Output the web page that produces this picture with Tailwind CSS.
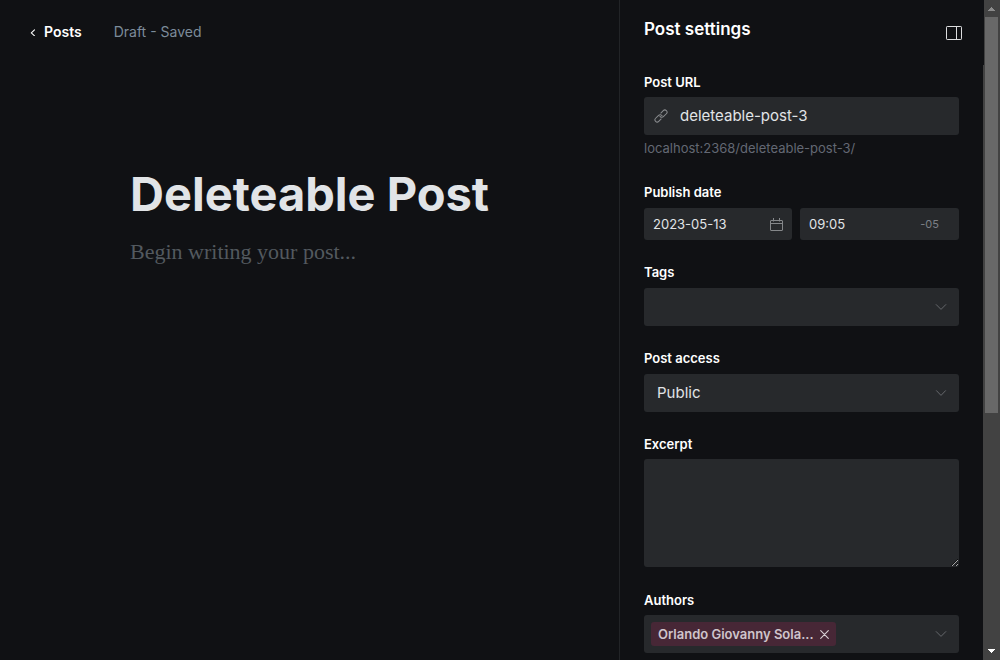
<!DOCTYPE html>
<html lang="en">
<head>
<meta charset="utf-8">
<meta name="viewport" content="width=device-width, initial-scale=1">
<title>Deleteable Post</title>
<script src="https://cdn.jsdelivr.net/npm/@tailwindcss/browser@4"></script>
</head>
<body class="flex h-screen overflow-hidden bg-[#101114] font-['Inter',sans-serif] text-[#e1e4e7]">

<main class="flex min-w-0 flex-1 flex-col">
  <header class="flex items-center gap-8 px-7 pt-5">
    <a href="#" class="flex h-6 items-center gap-2 text-sm font-semibold text-white">
      <svg class="size-2 shrink-0" viewBox="0 0 8 8" fill="none" stroke="#fff" stroke-width="1.1" stroke-linecap="round" stroke-linejoin="round" aria-hidden="true"><path d="M6.5 1.8 3.3 4.9 6.5 7.8"/></svg>
      Posts
    </a>
    <span class="text-sm text-[#7c8b9a]">Draft - Saved</span>
  </header>
  <section class="flex flex-col pt-[120px] pr-10 pl-[130px]">
    <h1 class="text-[47px] leading-[60px] font-bold">Deleteable Post</h1>
    <p class="mt-3 font-['Liberation_Serif',serif] text-[22px] leading-8 text-[#53595f]">Begin writing your post...</p>
  </section>
</main>

<aside class="flex w-[364px] shrink-0 flex-col overflow-hidden border-l border-[#222427]">
  <header class="flex h-[65px] shrink-0 justify-between pr-5 pl-6">
    <h2 class="pt-[17px] text-[17px] leading-6 font-semibold text-white">Post settings</h2>
    <button type="button" aria-label="Close settings" class="mt-[25px] h-4">
      <svg class="h-4 w-[18px]" viewBox="0 0 18 16" fill="none" stroke="#dcdddf" aria-hidden="true"><rect x="1.5" y="1.5" width="15" height="13" rx=".7"/><path d="M11.5 1.5v13"/></svg>
    </button>
  </header>
  <form class="flex flex-col gap-6 pt-[9px] pr-6 pl-6 text-[13px] leading-4">
    <div class="flex flex-col pb-1">
      <label for="url" class="mb-[7px] font-semibold text-white">Post URL</label>
      <div class="flex h-[38px] items-center gap-3 rounded-[3px] bg-[#27292c] px-[10px]">
        <svg class="size-[14px] shrink-0" viewBox="0 0 14 14" fill="none" stroke="#8b8d90" stroke-linecap="round" aria-hidden="true"><g transform="rotate(-45 7 7)"><path d="M5 9.2H1.6a2.2 2.2 0 0 1 0-4.4h4.2A2.2 2.2 0 0 1 7.9 7.6"/><path d="M9 4.8h3.400a2.2 2.2 0 0 1 0 4.4H8.2A2.2 2.2 0 0 1 6.1 6.4"/></g></svg>
        <input id="url" type="text" value="deleteable-post-3" class="min-w-0 flex-1 bg-transparent text-[15px] leading-5 text-[#e1e4e7] outline-none">
      </div>
      <p class="mt-[5px] text-[#636873]">localhost:2368/deleteable-post-3/</p>
    </div>

    <div class="flex flex-col">
      <label for="date" class="mb-2 font-semibold text-white">Publish date</label>
      <div class="flex gap-2">
        <div class="flex h-8 w-[148px] shrink-0 items-center rounded-[3px] bg-[#27292c] px-[9px]">
          <input id="date" type="text" value="2023-05-13" class="min-w-0 flex-1 bg-transparent text-[13px] text-[#e1e4e7] outline-none">
          <svg class="size-[13px] shrink-0" viewBox="0 0 13 13" fill="none" stroke="#85878a" aria-hidden="true"><rect x=".5" y="2.5" width="12" height="10" rx=".5"/><path d="M.5 5.5h12M3.5 0v3.5M9.5 0v3.5"/></svg>
        </div>
        <div class="flex h-8 min-w-0 flex-1 items-center rounded-[3px] bg-[#27292c] pr-5 pl-[9px]">
          <input id="time" aria-label="Publish time" type="text" value="09:05" class="min-w-0 flex-1 bg-transparent text-[13px] text-[#e1e4e7] outline-none">
          <span class="shrink-0 text-[11px] text-[#7c8087]">-05</span>
        </div>
      </div>
    </div>

    <div class="flex flex-col">
      <label for="tags" class="mb-2 font-semibold text-white">Tags</label>
      <div class="flex h-[38px] items-center rounded-[3px] bg-[#27292c] px-3">
        <input id="tags" type="text" class="min-w-0 flex-1 bg-transparent text-[15px] outline-none">
        <svg class="h-[6px] w-3 shrink-0" viewBox="0 0 12 6" fill="none" stroke="#66686c" stroke-linecap="round" stroke-linejoin="round" aria-hidden="true"><path d="M1.2.6 6 5.4 10.8.6"/></svg>
      </div>
    </div>

    <div class="flex flex-col">
      <label for="access" class="mb-2 font-semibold text-white">Post access</label>
      <div class="relative flex">
        <select id="access" class="h-[38px] w-full appearance-none rounded-[3px] bg-[#27292c] pr-9 pl-[13px] text-[15px] text-[#e1e4e7] outline-none"><option>Public</option></select>
        <svg class="pointer-events-none absolute top-4 right-3 h-[6px] w-3" viewBox="0 0 12 6" fill="none" stroke="#66686c" stroke-linecap="round" stroke-linejoin="round" aria-hidden="true"><path d="M1.5.7 6 5.4 10.5.7"/></svg>
      </div>
    </div>

    <div class="flex flex-col pb-px">
      <label for="excerpt" class="mb-[7px] font-semibold text-white">Excerpt</label>
      <textarea id="excerpt" class="h-[108px] w-full resize rounded-[3px] bg-[#27292c] p-3 text-[15px] outline-none"></textarea>
    </div>

    <div class="flex flex-col">
      <label for="authors" class="mb-[7px] font-semibold text-white">Authors</label>
      <div class="flex h-[38px] items-center rounded-[3px] bg-[#27292c] pr-3 pl-[7px]">
        <span class="flex h-6 shrink-0 items-center gap-[6px] rounded-[3px] bg-[#472736] px-[7px] font-semibold text-[#cfc4cb]">Orlando Giovanny Sola...
          <button type="button" aria-label="Remove author"><svg class="size-[9px]" viewBox="0 0 9 9" fill="none" stroke="#d9d0d5" stroke-width="1.1" stroke-linecap="round" aria-hidden="true"><path d="m.7.7 7.6 7.6M8.3.7.7 8.3"/></svg></button>
        </span>
        <input id="authors" type="text" class="min-w-0 flex-1 bg-transparent text-[15px] outline-none">
        <svg class="h-[6px] w-3 shrink-0" viewBox="0 0 12 6" fill="none" stroke="#66686c" stroke-linecap="round" stroke-linejoin="round" aria-hidden="true"><path d="M1.2.6 6 5.4 10.8.6"/></svg>
      </div>
    </div>
  </form>
</aside>

<div class="flex w-[17px] shrink-0 flex-col items-center bg-[#424242]" aria-hidden="true">
  <div class="relative h-[17px] w-full shrink-0">
    <div class="absolute top-0 left-0 h-[65px] w-px bg-[#101114]"></div>
    <svg class="size-[17px]" viewBox="0 0 17 17" shape-rendering="crispEdges"><path fill="#8b8b8b" d="M5 11h7L8.500 7z"/></svg>
  </div>
  <div class="h-[396px] w-[13px] bg-[#686868]"></div>
  <svg class="mt-auto size-[17px] shrink-0" viewBox="0 0 17 17" shape-rendering="crispEdges"><path fill="#fff" d="M5 6h7L8.500 10z"/></svg>
</div>
</body>
</html>
